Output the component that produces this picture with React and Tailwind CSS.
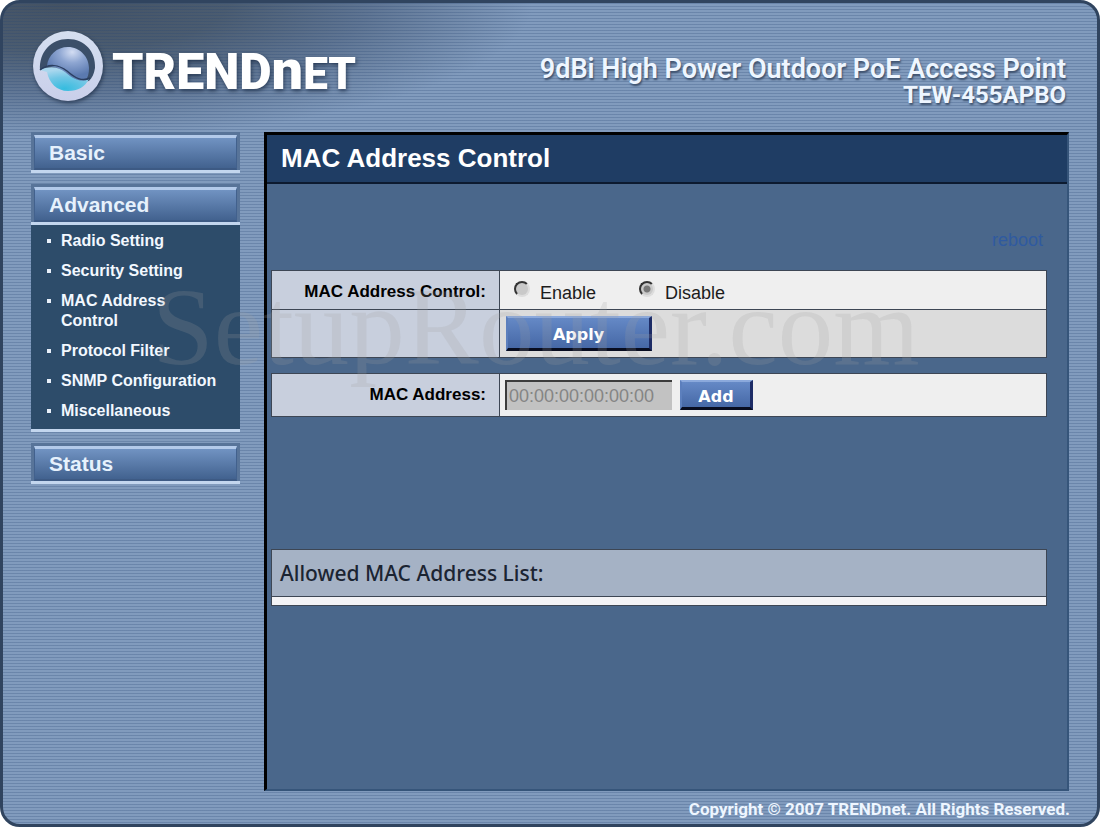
import { useState } from "react";

const advancedItems = [
  "Radio Setting",
  "Security Setting",
  "MAC Address Control",
  "Protocol Filter",
  "SNMP Configuration",
  "Miscellaneous",
];

function Logo() {
  return (
    <a
      href="#home"
      className="flex items-center gap-2 text-white [filter:drop-shadow(1px_2px_2px_rgba(20,35,60,0.7))]"
    >
      <svg viewBox="0 0 72 72" className="h-[72px] w-[72px]" aria-hidden="true">
        <defs>
          <linearGradient id="ring" x1="0" y1="0" x2="0" y2="1">
            <stop offset="0" stopColor="#d5dff0" />
            <stop offset="1" stopColor="#c9cfea" />
          </linearGradient>
          <radialGradient id="sky" cx="0.6" cy="0.15" r="0.7">
            <stop offset="0" stopColor="#d3ddf3" />
            <stop offset="0.45" stopColor="#8ea6d2" />
            <stop offset="1" stopColor="#5b7ab0" />
          </radialGradient>
          <radialGradient id="sea" cx="0.5" cy="0.9" r="0.8">
            <stop offset="0" stopColor="#35bcdf" />
            <stop offset="0.6" stopColor="#71c6e5" />
            <stop offset="1" stopColor="#a9d7ee" />
          </radialGradient>
        </defs>
        <circle cx="36" cy="36" r="35" fill="url(#ring)" />
        <path
          d="M8 40C7 22 19 9 36 9C53 9 64 22 63 38C62 44 60 48 57 51L50 52L20 40Z"
          fill="#3b4f69"
        />
        <path
          d="M15 36C16 25 25 17 36 17C48 17 57 27 57 38C57 43 56 48 53 51C37 52 31 35 15 36Z"
          fill="url(#sky)"
        />
        <path
          d="M8 40C16 36 26 36 33 42C41 49 49 53 57 49C53 57 46 61 36 61C25 61 17 53 15 42Z"
          fill="url(#sea)"
        />
        <path
          d="M8 40C17 33 27 35 35 41C43 48 50 52 58 48"
          fill="none"
          stroke="#2b3f60"
          strokeWidth="1.5"
        />
      </svg>
      <span className="pt-3 font-['Roboto',sans-serif] text-[50px] leading-[60px] font-black">
        TREND<span className="text-[56px]">n</span>
        <span className="text-[44px]">ET</span>
      </span>
    </a>
  );
}

function MenuButton({ children }) {
  return (
    <div className="border-b-3 border-[#c3d6ee] bg-[#587499] px-[3px] pt-[3px]">
      <button
        type="button"
        className="block w-full border-t-3 border-r border-b-2 border-l border-t-[#b3caea] border-r-[#42618d] border-b-[#3d5a84] border-l-[#42618d] bg-linear-to-b from-[#7193c2] to-[#42628f] px-[14px] text-left font-['Liberation_Sans',sans-serif] text-[21px] leading-[30px] font-bold text-[#e6f1fc]"
      >
        {children}
      </button>
    </div>
  );
}

function ActionButton({ className, children }) {
  return (
    <button
      type="button"
      className={`border-t-2 border-r-3 border-b-3 border-l-2 border-t-[#8ba9dc] border-r-[#1d2c66] border-b-[#080d20] border-l-[#5c7fbd] bg-linear-to-b from-[#6589c6] to-[#4668a6] font-['DejaVu_Sans',sans-serif] text-base font-bold text-white ${className}`}
    >
      {children}
    </button>
  );
}

function Radio({ label, ...props }) {
  return (
    <label className="flex items-center gap-[10px] text-lg leading-6 text-[#1c1c1c]">
      <input
        type="radio"
        name="mac-control"
        className="mb-2 h-4 w-4 appearance-none rounded-full border-2 border-t-[#333] border-r-[#ddd] border-b-[#ddd] border-l-[#333] bg-[#c9c9c9] checked:bg-[radial-gradient(circle,#777_0_3px,#c9c9c9_4px)]"
        {...props}
      />
      {label}
    </label>
  );
}

export default function App() {
  const [mode, setMode] = useState("disable");

  return (
    <div className="relative flex min-h-screen flex-col overflow-hidden rounded-[20px] border-3 border-[#30445f] bg-[#819bbd] bg-[repeating-linear-gradient(to_bottom,rgba(40,70,115,0.25)_0_1px,transparent_1px_3px),radial-gradient(ellipse_470px_135px_at_60px_0,#445263_0%,#4b5c70_35%,#5f7593_65%,transparent_100%)] font-['Liberation_Sans',sans-serif]">
      {/* Header */}
      <header className="flex h-[129px] items-center justify-between pr-[31px] pb-1 pl-[29px]">
        <Logo />
        <div className="pt-[30px] text-right font-['Roboto',sans-serif] font-bold text-[#eef6ff] [text-shadow:1px_2px_2px_#3d506c]">
          <h1 className="text-[27px] leading-7 font-semibold">
            9dBi High Power Outdoor PoE Access Point
          </h1>
          <p className="text-[24px] leading-6">TEW-455APBO</p>
        </div>
      </header>

      <div className="flex flex-1 gap-6 pr-7 pl-7">
        {/* Side menu */}
        <nav className="flex w-[209px] shrink-0 flex-col gap-[11px]">
          <MenuButton>Basic</MenuButton>
          <div>
            <MenuButton>Advanced</MenuButton>
            <ul className="flex flex-col gap-[10px] border-b-3 border-[#c3d6ee] bg-[#2d4c6a] pt-[6px] pr-5 pb-2 pl-4 text-base leading-5 font-bold text-[#f2f8ff]">
              {advancedItems.map((item) => (
                <li key={item} className="flex gap-[10px]">
                  <span className="mt-2 h-1 w-1 shrink-0 bg-[#e8f0fa]" />
                  <a href="#menu">{item}</a>
                </li>
              ))}
            </ul>
          </div>
          <MenuButton>Status</MenuButton>
        </nav>

        {/* Main panel */}
        <main className="flex-1 border-t-3 border-r-2 border-b-2 border-l-3 border-t-black border-r-[#36557a] border-b-[#36557a] border-l-black bg-[#4a678b]">
          <h2 className="border-b-2 border-[#0c1a30] bg-[#1f3d64] pl-[14px] text-[26px] leading-[47px] font-bold text-white">
            MAC Address Control
          </h2>

          <div className="pr-5 pl-1">
            <div className="pt-11 pr-1 text-right text-lg leading-6">
              <a href="#reboot" className="text-[#2f5aa0]">
                reboot
              </a>
            </div>

            <form
              className="pt-[18px]"
              onSubmit={(e) => e.preventDefault()}
            >
              <div className="grid grid-cols-[227px_1fr] gap-px border border-[#3d4654] bg-[#3d4654]">
                <div className="bg-[#c8cfdd] pt-1 pr-[13px] text-right text-[17px] leading-[34px] font-bold">
                  MAC Address Control:
                </div>
                <div className="flex items-center gap-[43px] bg-[#efefef] pt-[6px] pl-[14px]">
                  <Radio
                    label="Enable"
                    checked={mode === "enable"}
                    onChange={() => setMode("enable")}
                  />
                  <Radio
                    label="Disable"
                    checked={mode === "disable"}
                    onChange={() => setMode("disable")}
                  />
                </div>
                <div className="bg-[#c8cfdd]" />
                <div className="bg-[#dcdcdc] px-[6px] py-[6px]">
                  <ActionButton className="block h-[35px] w-[146px] pt-1">
                    Apply
                  </ActionButton>
                </div>
              </div>

              <div className="mt-[15px] grid grid-cols-[227px_1fr] gap-px border border-[#3d4654] bg-[#3d4654]">
                <label
                  htmlFor="mac"
                  className="bg-[#c8cfdd] pr-[13px] text-right text-[17px] leading-[42px] font-bold"
                >
                  MAC Address:
                </label>
                <div className="flex items-center gap-2 bg-[#efefef] px-[5px]">
                  <input
                    id="mac"
                    type="text"
                    disabled
                    defaultValue="00:00:00:00:00:00"
                    className="h-[30px] w-[167px] border-t-2 border-l-2 border-[#3c3c3c] bg-[#c2c2c2] px-[2px] text-lg text-[#858585]"
                  />
                  <ActionButton className="h-[30px] w-[73px] pt-1 leading-5">
                    Add
                  </ActionButton>
                </div>
              </div>
            </form>

            <table className="mt-[132px] w-full border-collapse border border-[#3d4654]">
              <thead>
                <tr className="border-b border-[#3d4654] bg-[#a5b2c5]">
                  <th className="pl-2 text-left font-['Noto_Sans',sans-serif] text-[21px] leading-[46px] font-medium text-[#1b2432]">
                    Allowed MAC Address List:
                  </th>
                </tr>
              </thead>
              <tbody>
                <tr>
                  <td className="h-[9px] bg-[#f3f3f6]" />
                </tr>
              </tbody>
            </table>
          </div>
        </main>
      </div>

      <footer className="pt-1 pr-[27px] text-right font-['Roboto',sans-serif] text-[17px] leading-[29px] font-bold text-[#eef6ff]">
        Copyright © 2007 TRENDnet. All Rights Reserved.
      </footer>

      {/* Watermark */}
      <div className="pointer-events-none absolute top-[254px] left-[149px] font-['Liberation_Serif',serif] text-[111px] leading-[140px] text-[#a0a0a0]/20">
        SetupRouter.com
      </div>
    </div>
  );
}
